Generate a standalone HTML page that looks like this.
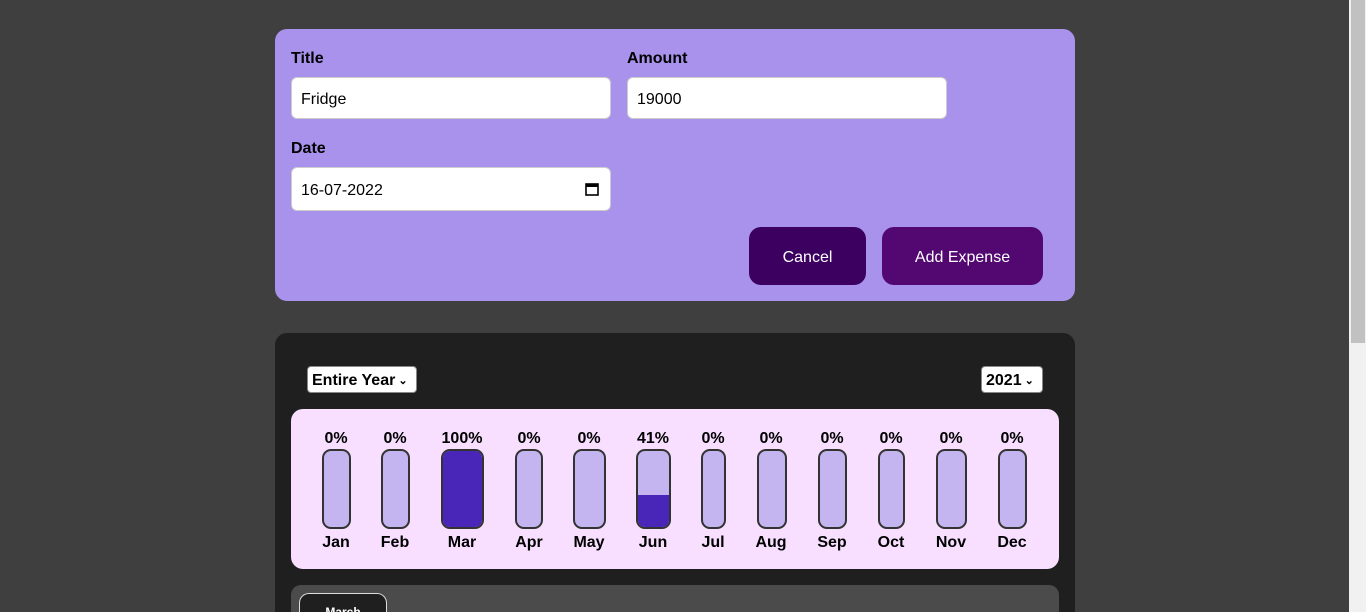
<!DOCTYPE html>
<html style="overflow:hidden;height:612px"><head><style>
*{box-sizing:border-box;margin:0;padding:0}
body{width:1366px;height:612px;overflow:hidden;background:#3f3f3f;font-family:"Liberation Sans",sans-serif;position:relative}
.a{position:absolute}
.form{left:275px;top:29px;width:800px;height:272px;background:#a892ec;border-radius:12px}
.lbl{font-weight:bold;font-size:16px;color:#000}
.inp{background:#fff;border:1px solid #ccc;border-radius:6px;font-size:16px;padding-left:9px;padding-top:3px;display:flex;align-items:center}
.btn{color:#fff;font-size:16px;border-radius:12px;display:flex;align-items:center;justify-content:center;padding-top:4px}
.card{left:275px;top:333px;width:800px;height:279px;background:#1f1f1f;border-radius:12px 12px 0 0}
.sel{background:#fff;border:1px solid #888;border-radius:4px;font-weight:bold;font-size:16px;display:flex;align-items:center;padding-left:4px;padding-top:2px}
.chart{left:291px;top:409px;width:768px;height:160px;background:#f8dfff;border-radius:12px}
.bar{top:449px;height:80px;border:2px solid #333;border-radius:9px;background:#c4b5f0;overflow:hidden}
.fill{position:absolute;bottom:0;left:0;right:0;background:#4a26b8}
.t{font-weight:bold;font-size:16px;color:#000;text-align:center;width:80px;margin-left:-40px}
</style></head><body>
<div class="a form"></div>
<div class="a lbl" style="left:291px;top:50px">Title</div>
<div class="a lbl" style="left:627px;top:50px">Amount</div>
<div class="a inp" style="left:291px;top:77px;width:320px;height:42px">Fridge</div>
<div class="a inp" style="left:627px;top:77px;width:320px;height:42px">19000</div>
<div class="a lbl" style="left:291px;top:140px">Date</div>
<div class="a inp" style="left:291px;top:167px;width:320px;height:44px">16-07-2022
<svg class="a" style="left:292px;top:13px" width="16" height="16" viewBox="0 0 16 16"><rect x="2" y="3" width="12" height="11" fill="none" stroke="#000" stroke-width="1.6"/><rect x="2" y="3" width="12" height="3" fill="#000"/></svg></div>
<div class="a btn" style="left:749px;top:227px;width:117px;height:58px;background:#3c0060">Cancel</div>
<div class="a btn" style="left:882px;top:227px;width:161px;height:58px;background:#520870">Add Expense</div>

<div class="a card"></div>
<div class="a sel" style="left:307px;top:366px;width:110px;height:27px">Entire Year <span style="font-size:11px;margin-left:3px">&#8964;</span></div>
<div class="a sel" style="left:981px;top:366px;width:62px;height:27px">2021 <span style="font-size:11px;margin-left:3px">&#8964;</span></div>
<div class="a chart"></div>

<div class="a bar" style="left:322px;width:29px"></div>
<div class="a bar" style="left:381px;width:29px"></div>
<div class="a bar" style="left:441px;width:43px"><div class="fill" style="top:0"></div></div>
<div class="a bar" style="left:515px;width:28px"></div>
<div class="a bar" style="left:573px;width:33px"></div>
<div class="a bar" style="left:636px;width:35px"><div class="fill" style="height:32px"></div></div>
<div class="a bar" style="left:701px;width:25px"></div>
<div class="a bar" style="left:757px;width:30px"></div>
<div class="a bar" style="left:818px;width:29px"></div>
<div class="a bar" style="left:878px;width:27px"></div>
<div class="a bar" style="left:936px;width:31px"></div>
<div class="a bar" style="left:998px;width:29px"></div>

<div class="a t" style="left:336px;top:430px">0%</div><div class="a t" style="left:336px;top:534px">Jan</div>
<div class="a t" style="left:395px;top:430px">0%</div><div class="a t" style="left:395px;top:534px">Feb</div>
<div class="a t" style="left:462px;top:430px">100%</div><div class="a t" style="left:462px;top:534px">Mar</div>
<div class="a t" style="left:529px;top:430px">0%</div><div class="a t" style="left:529px;top:534px">Apr</div>
<div class="a t" style="left:589px;top:430px">0%</div><div class="a t" style="left:589px;top:534px">May</div>
<div class="a t" style="left:653px;top:430px">41%</div><div class="a t" style="left:653px;top:534px">Jun</div>
<div class="a t" style="left:713px;top:430px">0%</div><div class="a t" style="left:713px;top:534px">Jul</div>
<div class="a t" style="left:771px;top:430px">0%</div><div class="a t" style="left:771px;top:534px">Aug</div>
<div class="a t" style="left:832px;top:430px">0%</div><div class="a t" style="left:832px;top:534px">Sep</div>
<div class="a t" style="left:891px;top:430px">0%</div><div class="a t" style="left:891px;top:534px">Oct</div>
<div class="a t" style="left:951px;top:430px">0%</div><div class="a t" style="left:951px;top:534px">Nov</div>
<div class="a t" style="left:1012px;top:430px">0%</div><div class="a t" style="left:1012px;top:534px">Dec</div>

<div class="a" style="left:291px;top:585px;width:768px;height:27px;background:#4b4b4b;border-radius:10px 10px 0 0"></div>
<div class="a" style="left:299px;top:593px;width:88px;height:19px;background:#1f1f1f;border:1px solid #ddd;border-bottom:none;border-radius:10px 10px 0 0;color:#fff;font-weight:bold;font-size:12px;text-align:center;padding-top:11px;overflow:hidden">March</div>

<div class="a" style="left:1349px;top:0;width:17px;height:612px;background:#f1f1f1"></div>
<div class="a" style="left:1351px;top:0;width:14px;height:343px;background:#c1c1c1"></div>
</body></html>
